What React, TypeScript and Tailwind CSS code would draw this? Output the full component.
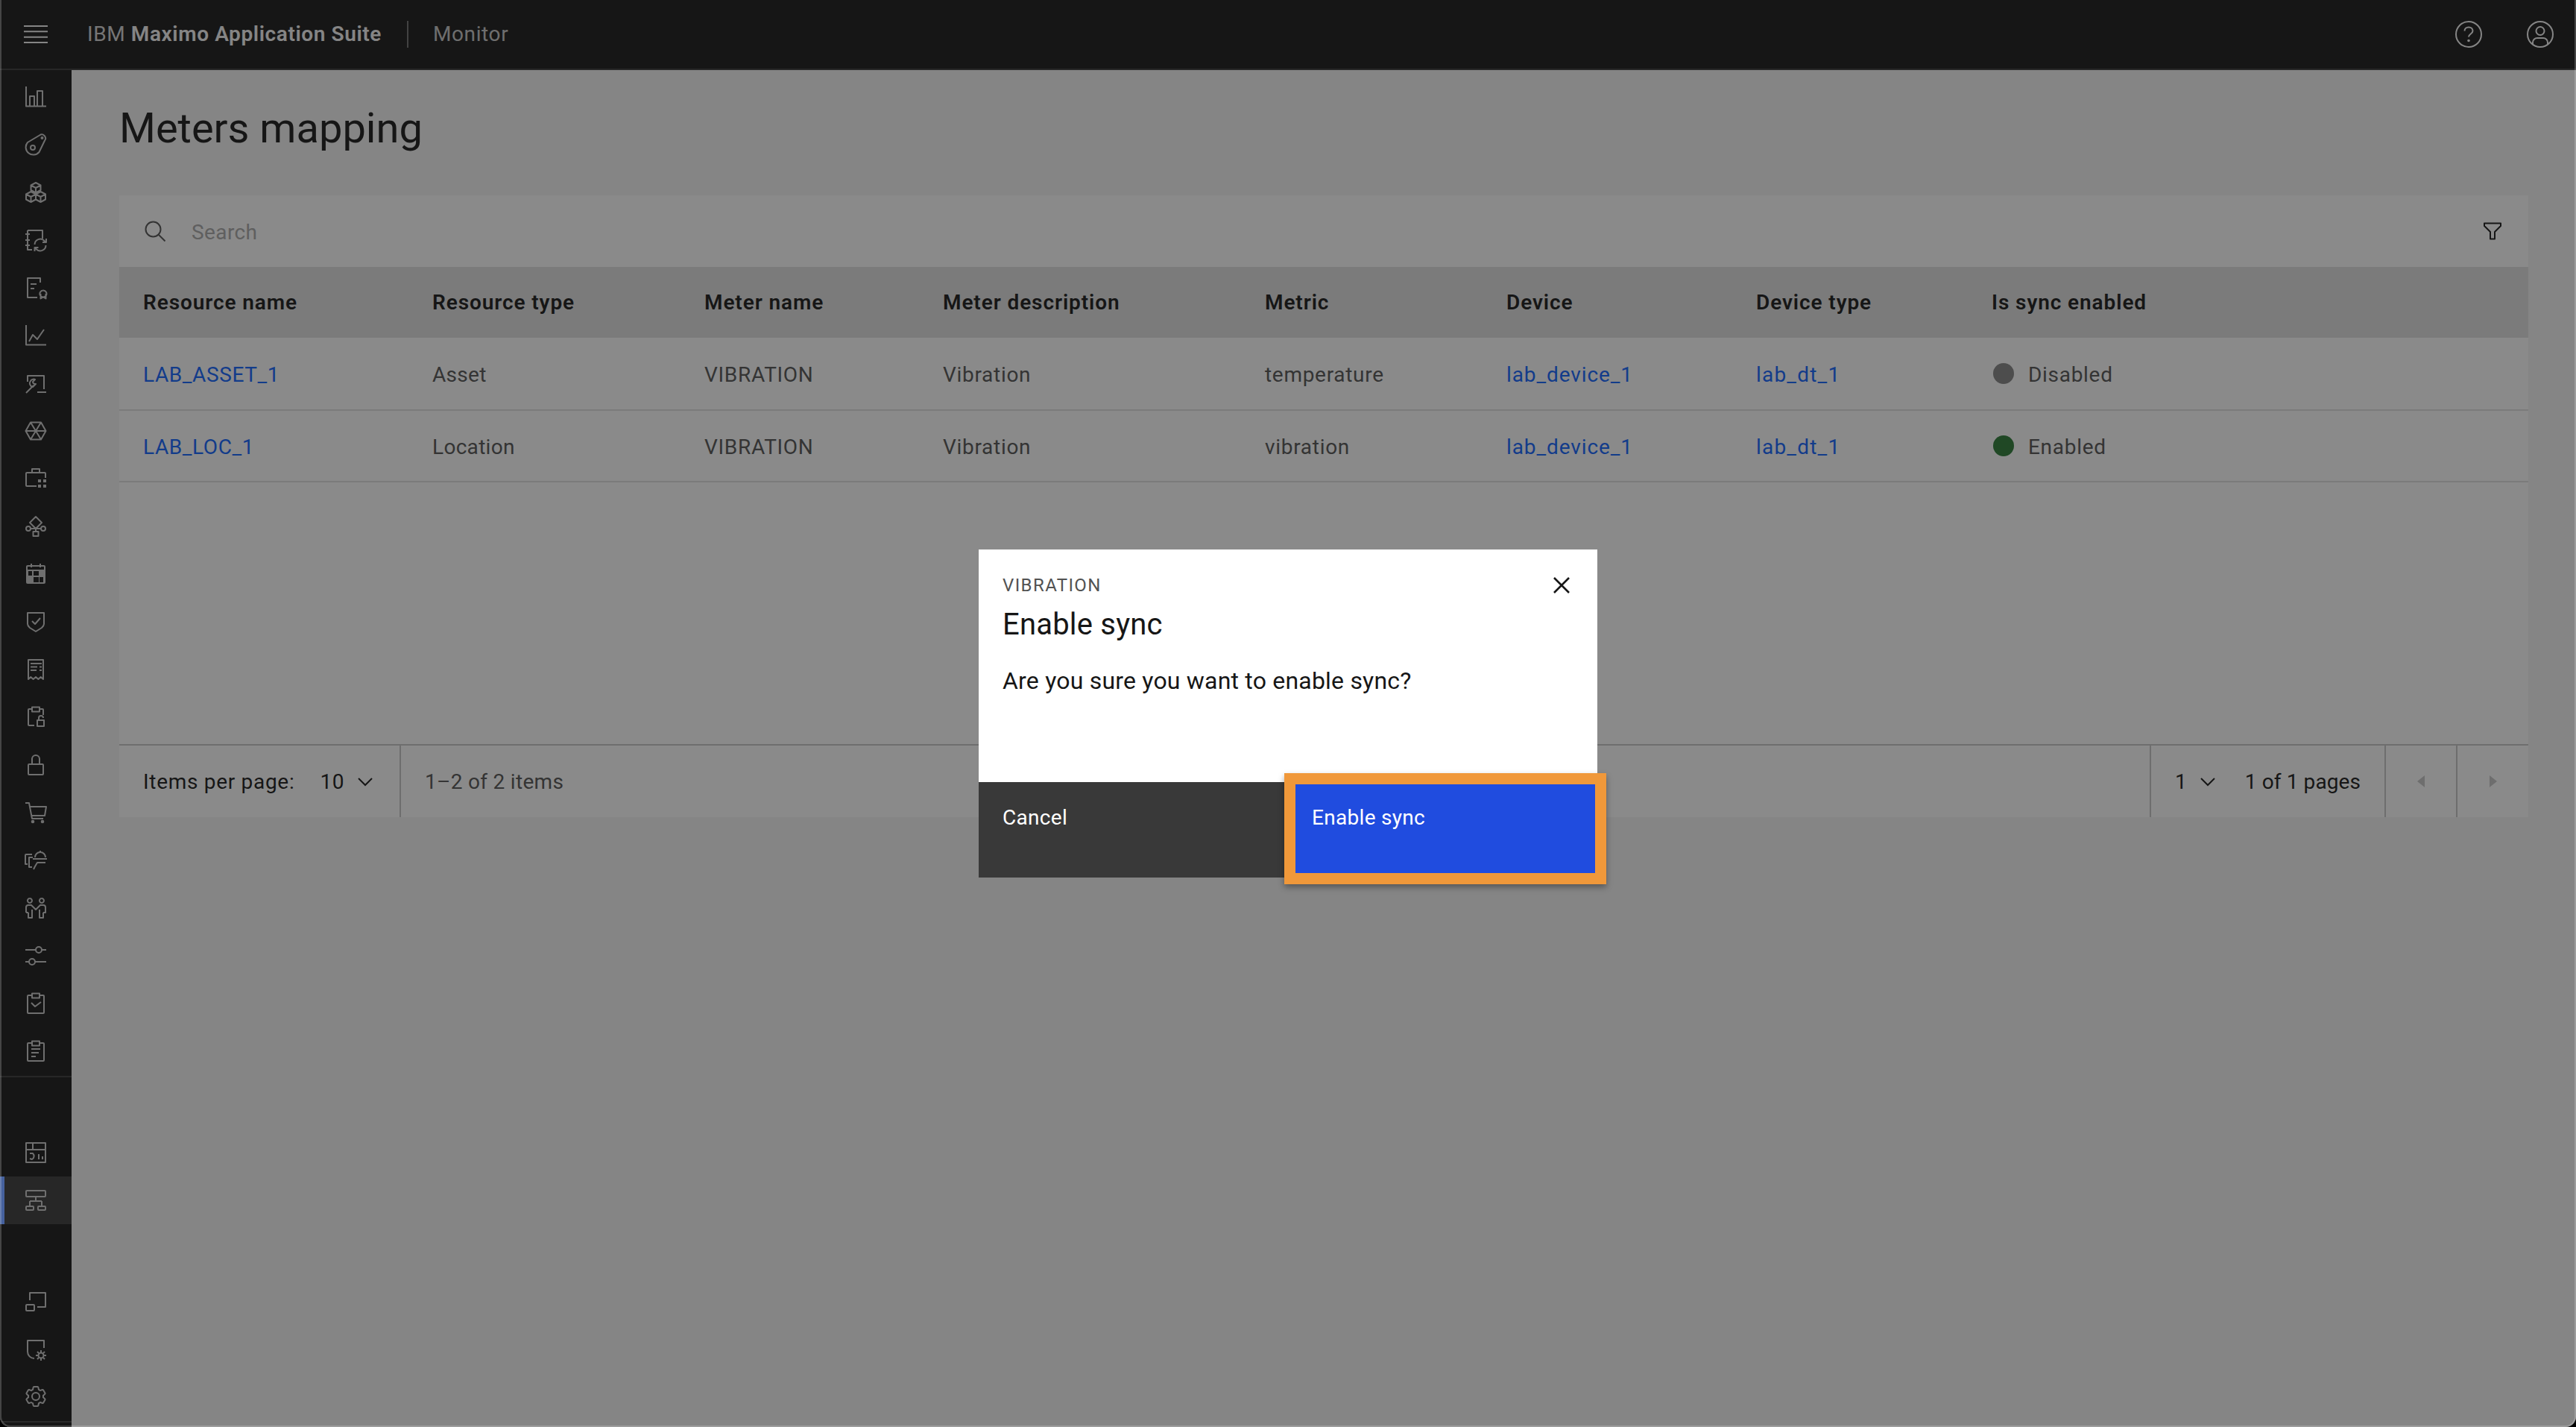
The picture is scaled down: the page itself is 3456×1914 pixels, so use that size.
import React from "react";

const S = ({ children }: { children: React.ReactNode }) => (
  <svg viewBox="0 0 32 32" width={32} height={32} fill="none" stroke="currentColor" strokeWidth={2} strokeLinejoin="round" className="block">
    {children}
  </svg>
);

const navTop: React.ReactNode[] = [
  <path d="M3 2v26.500h27M8 28V15h6v13M18 28V8h7v20" />,
  <><path d="M5 13 21 3.500a5 5 0 0 1 7 7L20.500 26A10 10 0 1 1 5 13z" /><circle cx="12" cy="20" r="3" /><circle cx="24.500" cy="7" r="1" /></>,
  <path d="M16 3l6.500 3.500V13L16 16.500 9.500 13V6.500zM9.500 6.500L16 10l6.500-3.500M16 10v6.500M9.500 15l6.500 3.500v7L9.500 29 3 25.500v-7zM3 18.500L9.500 22l6.500-3.500M9.500 22v7M22.500 15l6.500 3.500v7L22.500 29 16 25.500v-7zM16 18.500l6.500 3.500 6.500-3.500M22.500 22v7" />,
  <path d="M5 3v26h6M5 3h20v11M2 8h6M2 16h6M2 23h6M14.500 22a7.500 7.500 0 0 1 13-5l2 2M30 14v5h-5M29.500 23a7.500 7.500 0 0 1-13 5l-2-2M14.500 31v-5h5" />,
  <path d="M22 9V3H5v26h13M9 11h8M9 17h5M26 19.500a4.500 4.500 0 1 1-.1 0M22.500 24v6.500l3.500-2 3.500 2V24" />,
  <path d="M3 2v26.500h27M7 24l5-9 6 6 9-13" />,
  <path d="M5 14V6h22v18M18 28h12M3 29l10-10M9 13a5 5 0 0 0 3 8l4-4c-2 0-4-1-4-3l3-3c-2-1-5 0-6 2z" />,
  <path d="M2.500 16 9 4.500h14L29.500 16 23 27.500H9zM9 4.500l14 23M23 4.500l-14 23M2.500 16h27" />,
  <><path d="M17 26H4a1 1 0 0 1-1-1V9a1 1 0 0 1 1-1h24a1 1 0 0 1 1 1v6M11 8V3h10v5" /><path d="M19 17h4v4h-4zM26 17h4v4h-4zM19 24h4v4h-4zM26 24h4v4h-4z" fill="currentColor" stroke="none" /></>,
  <><path d="M16 3l8 8-8 8-8-8zM16 19v4M9 19h14M12.500 23h7v6h-7z" /><circle cx="6" cy="19" r="3" /><circle cx="26" cy="19" r="3" /></>,
  <><path d="M5 5h22a1 1 0 0 1 1 1v21a1 1 0 0 1-1 1H5a1 1 0 0 1-1-1V6a1 1 0 0 1 1-1zM10 2v5M22 2v5" /><path fillRule="evenodd" fill="currentColor" stroke="none" d="M4 10h24v18H4zM6 12v6h5v-6zM13 12v6h7v-6zM13 20v7h7v-7zM21 20v7h5v-7z" /></>,
  <path d="M5 4h22v15c0 2-1 3-3 5l-8 5-8-5c-2-2-3-3-3-5zM11 15l4 4 7-8" />,
  <path d="M6 3h20v26l-3.300-3-3.300 3-3.400-3-3.400 3-3.300-3L6 29zM9 8h15M9 12.500h9M21 12.500h3M9 17h8M21 17h3" />,
  <path d="M11 5H7a1 1 0 0 0-1 1v20a1 1 0 0 0 1 1h7M21 5h4a1 1 0 0 1 1 1v7M11 2.500h10v6H11zM18 20h9v8h-9zM20 20v-3a3 3 0 0 1 6 0" />,
  <path d="M7 15h18a1 1 0 0 1 1 1v12a1 1 0 0 1-1 1H7a1 1 0 0 1-1-1V16a1 1 0 0 1 1-1zM11 15V8a5 5 0 0 1 10 0v7" />,
  <><path d="M2 3h5l4 21h15M8 8h22l-2 12H10" /><circle cx="12" cy="28" r="1.300" fill="currentColor" /><circle cx="25" cy="28" r="1.300" fill="currentColor" /></>,
  <path d="M11 8H3a1 1 0 0 0-1 1v12h3M12 12H7v13h4M22 3v2M15 12a7 7 0 0 1 14 0M12 14h19M29 19H18l-3 5-2 4" />,
  <path d="M8 3a3 3 0 1 1-.1 0M24 3a3 3 0 1 1-.1 0M3 22v-7a3 3 0 0 1 3-3h4l6 6 6-6h4a3 3 0 0 1 3 3v7h-3M6 22v7h5V18M26 22v7h-5V18M6 22H3" />,
  <><path d="M2 8h14M24 8h6M2 24h5M15 24h15" /><circle cx="20" cy="8" r="4" /><circle cx="11" cy="24" r="4" /></>,
  <path d="M11 5H6a1 1 0 0 0-1 1v22a1 1 0 0 0 1 1h20a1 1 0 0 0 1-1V6a1 1 0 0 0-1-1h-5M11 2.500h10v6H11zM10 15l5 5 8-6" />,
  <path d="M11 5H6a1 1 0 0 0-1 1v22a1 1 0 0 0 1 1h20a1 1 0 0 0 1-1V6a1 1 0 0 0-1-1h-5M11 2.500h10v6H11zM10 13h12M10 18h10M10 23h6" />,
];

const navBottomA: React.ReactNode[] = [
  <path d="M3 3h26v26H3zM3 12h26M12 3v9M8 17h4a5 5 0 0 1-1 8l-3-1M20 18v7M25 21v4" />,
  <path d="M4 3h24a1 1 0 0 1 1 1v6a1 1 0 0 1-1 1H4a1 1 0 0 1-1-1V4a1 1 0 0 1 1-1zM16 11v6M8 17h16M8 17v7M24 17v7M4 24h8a1 1 0 0 1 1 1v3a1 1 0 0 1-1 1H4a1 1 0 0 1-1-1v-3a1 1 0 0 1 1-1zM20 24h8a1 1 0 0 1 1 1v3a1 1 0 0 1-1 1h-8a1 1 0 0 1-1-1v-3a1 1 0 0 1 1-1z" />,
];

const navBottomB: React.ReactNode[] = [
  <path d="M8 15V5h21v19H18M4 21h9a1 1 0 0 1 1 1v6a1 1 0 0 1-1 1H4a1 1 0 0 1-1-1v-6a1 1 0 0 1 1-1z" />,
  <><path d="M27 15V5H5v15a9 9 0 0 0 9 9" /><circle cx="23" cy="25" r="3.500" /><path d="M23 18v3M23 29v3M16 25h3M27 25h3M18 20l2 2M26 28l2 2M18 30l2-2M26 22l2-2" /></>,
  <>
    <path stroke="none" fill="currentColor" d="M27,16.76c0-.25,0-.5,0-.76s0-.51,0-.77l1.920-1.680A2,2,0,0,0,29.300,11L26.940,7a2,2,0,0,0-1.730-1,2,2,0,0,0-.640.100l-2.430.820a11.350,11.350,0,0,0-1.310-.750l-.510-2.520a2,2,0,0,0-2-1.610H13.640a2,2,0,0,0-2,1.610l-.510,2.520a11.480,11.480,0,0,0-1.320.750L7.430,6.060A2,2,0,0,0,6.790,6,2,2,0,0,0,5.060,7L2.700,11a2,2,0,0,0,.410,2.510L5,15.240c0,.250,0,.5,0,.760s0,.510,0,.770L3.110,18.450A2,2,0,0,0,2.700,21L5.060,25a2,2,0,0,0,1.730,1,2,2,0,0,0,.640-.100l2.430-.820a11.350,11.350,0,0,0,1.310.750l.510,2.520a2,2,0,0,0,2,1.610h4.720a2,2,0,0,0,2-1.610l.510-2.520a11.480,11.480,0,0,0,1.320-.750l2.420.820a2,2,0,0,0,.640.100,2,2,0,0,0,1.730-1L29.300,21a2,2,0,0,0-.410-2.510ZM25.210,24l-3.430-1.160a8.860,8.860,0,0,1-2.710,1.570L18.360,28H13.640l-.710-3.550a9.360,9.360,0,0,1-2.700-1.570L6.790,24,4.430,20l2.720-2.400a8.900,8.900,0,0,1,0-3.130L4.430,12,6.790,8l3.430,1.160a8.860,8.860,0,0,1,2.710-1.570L13.640,4h4.720l.710,3.550a9.360,9.360,0,0,1,2.700,1.570L25.210,8,27.570,12l-2.720,2.400a8.900,8.900,0,0,1,0,3.130L27.570,20Z" />
    <circle cx="16" cy="16" r="5" />
  </>,
];

const NavIcon = ({ children, active }: { children: React.ReactNode; active?: boolean }) => (
  <div className={active
    ? "h-16 flex items-center justify-center text-[#c8c8c8] bg-[#393939]"
    : "h-16 flex items-center justify-center text-[#c8c8c8]"}>
    {active ? <span className="absolute z-10 left-0 w-[6px] h-16 bg-[#46629e]" /> : null}
    <S>{children}</S>
  </div>
);

const Chevron = () => (
  <svg viewBox="0 0 20 12" width={20} height={12} fill="none" stroke="#161616" strokeWidth={2} className="block">
    <path d="M1 1l9 9 9-9" />
  </svg>
);

const Row = ({ a, b, metric, status, first }: { a: string; b: string; metric: string; status: "off" | "on"; first?: boolean }) => (
  <div className={first
    ? "grid grid-cols-[388px_365px_320px_432px_324px_335px_316px_minmax(0,1fr)] h-[98px] items-center border-b-2 border-[#e0e0e0] bg-white text-[#525252] pl-8 pt-[4px]"
    : "grid grid-cols-[388px_365px_320px_432px_324px_335px_316px_minmax(0,1fr)] h-24 items-center border-b-2 border-[#e0e0e0] bg-white text-[#525252] pl-8 pt-[4px]"}>
    <span className="text-[#0f62fe] tracking-[0.6px]">{a}</span>
    <div className="tracking-[0.3px]">{b}</div>
    <div>VIBRATION</div>
    <div>Vibration</div>
    <div>{metric}</div>
    <span className="text-[#0f62fe] tracking-[0.9px]">lab_device_1</span>
    <span className="text-[#0f62fe] tracking-[1.2px]">lab_dt_1</span>
    <div className="flex items-center">
      <span className={status === "on" ? "w-7 h-7 rounded-full bg-[#2a7a35] ml-[2px] mr-[19px] -translate-y-[2px]" : "w-7 h-7 rounded-full bg-[#858585] ml-[2px] mr-[19px] -translate-y-[2px]"} />
      {status === "on" ? "Enabled" : "Disabled"}
    </div>
  </div>
);

export default function App() {
  return (
    <div className="w-[3456px] h-[1914px] bg-black">
      <div className="relative w-full h-full overflow-hidden rounded-b-[14px] bg-[#f4f4f4] flex flex-col text-[28px] text-[#161616] font-['Roboto',sans-serif] tracking-[0.7px]">
        <header className="h-[94px] shrink-0 bg-[#161616] border-b-2 border-[#393939] flex items-center text-[#f4f4f4] pl-[32px] pr-[30px] tracking-[0.6px]">
          <svg viewBox="0 0 32 24" width={32} height={24} fill="none" stroke="#f4f4f4" strokeWidth={2} className="block">
            <path d="M0 1h32M0 8.300h32M0 15.700h32M0 23h32" />
          </svg>
          <div className="ml-[53px] pr-[34px] text-[#d4d4d4]">IBM <span className="font-semibold text-[#f4f4f4]">Maximo Application Suite</span></div>
          <div className="w-[2px] h-9 bg-[#6f6f6f]" />
          <div className="ml-[33px] text-[#c6c6c6]">Monitor</div>
          <div className="ml-auto flex items-center gap-[60px] text-[#f4f4f4]">
            <svg viewBox="0 0 36 36" width={36} height={36} fill="none" stroke="currentColor" strokeWidth={2} className="block">
              <circle cx="18" cy="18" r="17" />
              <path d="M12.500 13.500c0-3 2.500-5 5.500-5s5.500 2 5.500 5c0 4-5.500 4-5.500 8" />
              <circle cx="18" cy="26.500" r="1.800" fill="currentColor" stroke="none" />
            </svg>
            <svg viewBox="0 0 36 36" width={36} height={36} fill="none" stroke="currentColor" strokeWidth={2} className="block">
              <circle cx="18" cy="18" r="17" />
              <circle cx="18" cy="13.500" r="5.500" />
              <path d="M8 31v-2a6 6 0 0 1 6-6h8a6 6 0 0 1 6 6v2" />
            </svg>
          </div>
        </header>

        <div className="flex flex-1 min-h-0">
          <aside className="w-[96px] shrink-0 bg-[#161616] flex flex-col pt-1">
            {navTop.map((n, i) => <NavIcon key={i}>{n}</NavIcon>)}
            <div className="h-[2px] bg-[#393939] mt-[1px]" />
            <div className="mt-[69px]">
              <NavIcon>{navBottomA[0]}</NavIcon>
              <NavIcon active>{navBottomA[1]}</NavIcon>
            </div>
            <div className="mt-[71px]">
              {navBottomB.map((n, i) => <NavIcon key={i}>{n}</NavIcon>)}
            </div>
            <div className="mt-auto mb-[6px] h-[2px] bg-[#3e3e3e]" />
          </aside>

          <main className="flex-1 min-w-0 pl-[64px] pr-[64px]">
            <h1 className="text-[56px] leading-[72px] font-normal pt-[42px] pb-[54px] tracking-normal">Meters mapping</h1>
            <section className="bg-white">
              <div className="h-24 flex items-center pl-[34px] pr-[36px]">
                <svg viewBox="0 0 28 28" width={28} height={28} fill="none" stroke="#525252" strokeWidth={2} className="block">
                  <circle cx="11.500" cy="11.500" r="10" />
                  <path d="M18.500 18.500l9 9" />
                </svg>
                <span className="ml-[35px] mt-[3px] text-[#a8a8a8] tracking-[0.4px]">Search</span>
                <svg viewBox="0 0 24 24" width={24} height={24} fill="none" stroke="#161616" strokeWidth={2} className="block ml-auto">
                  <path d="M1 1.500h22v3.500l-8 8v9.500H9V13L1 5z" strokeLinejoin="round" />
                </svg>
              </div>
              <div className="grid grid-cols-[388px_365px_320px_432px_324px_335px_316px_minmax(0,1fr)] h-[95px] items-center bg-[#e0e0e0] font-semibold pl-8 tracking-[0.9px]">
                <div>Resource name</div>
                <div>Resource type</div>
                <div>Meter name</div>
                <div>Meter description</div>
                <div>Metric</div>
                <div>Device</div>
                <div>Device type</div>
                <div>Is sync enabled</div>
              </div>
              <Row first a="LAB_ASSET_1" b="Asset" metric="temperature" status="off" />
              <Row a="LAB_LOC_1" b="Location" metric="vibration" status="on" />
              <div className="h-[351px]" />
              <footer className="h-[98px] border-t-2 border-[#c6c6c6] flex items-stretch">
                <div className="w-[378px] shrink-0 flex items-center pl-8 pt-[2px] border-r-2 border-[#c6c6c6]">
                  <span>Items per page:</span>
                  <span className="ml-[34px]">10</span>
                  <span className="ml-[18px]"><Chevron /></span>
                </div>
                <div className="flex items-center pl-8 pt-[2px] text-[#525252] tracking-[0.3px]">1–2 of 2 items</div>
                <div className="ml-auto flex items-center w-[315px] pl-8 pt-[2px] border-l-2 border-[#c6c6c6] tracking-[0.1px]">
                  <span>1</span>
                  <span className="ml-[18px]"><Chevron /></span>
                  <span className="ml-[40px]">1 of 1 pages</span>
                </div>
                <div className="w-[96px] flex items-center justify-center border-l-2 border-[#c6c6c6]">
                  <svg viewBox="0 0 10 16" width={10} height={16} fill="#c6c6c6" className="block"><path d="M10 0v16L0 8z" /></svg>
                </div>
                <div className="w-[97px] flex items-center justify-center border-l-2 border-[#c6c6c6]">
                  <svg viewBox="0 0 10 16" width={10} height={16} fill="#c6c6c6" className="block"><path d="M0 0v16l10-8z" /></svg>
                </div>
              </footer>
            </section>
          </main>
        </div>

        <div className="absolute inset-0 z-[5] bg-[#16161680] flex items-center justify-center">
          <div className="relative w-[830px] h-[440px] bg-white flex flex-col tracking-[0.2px]">
            <div className="flex-1 px-8 pt-[32px]">
              <div className="flex justify-between items-start">
                <div>
                  <div className="text-[24px] leading-[32px] text-[#525252] tracking-[1.4px]">VIBRATION</div>
                  <div className="text-[40px] leading-[52px] mt-[11px]">Enable sync</div>
                </div>
                <svg viewBox="0 0 22 22" width={22} height={22} fill="none" stroke="#161616" strokeWidth={2.6} className="block mt-[5px] mr-[5px]">
                  <path d="M1 1l20 20M21 1L1 21" />
                </svg>
              </div>
              <div className="text-[32px] leading-[44px] mt-[27px]">Are you sure you want to enable sync?</div>
            </div>
            <div className="h-[128px] flex text-white tracking-[0.3px]">
              <div className="flex-1 bg-[#393939] pl-8 pt-[30px] leading-[36px]">Cancel</div>
              <div className="flex-1 bg-[#204cdf] pl-8 pt-[30px] leading-[36px]">Enable sync</div>
            </div>
            <div className="absolute left-[410px] top-[300px] w-[432px] h-[149px] border-[15px] border-[#f0983a] shadow-[0_4px_8px_rgba(0,0,0,0.35)]" />
          </div>
        </div>

        <div className="absolute inset-0 z-20 border-x-2 border-b-2 border-white/20 rounded-b-[14px] pointer-events-none" />
      </div>
    </div>
  );
}
